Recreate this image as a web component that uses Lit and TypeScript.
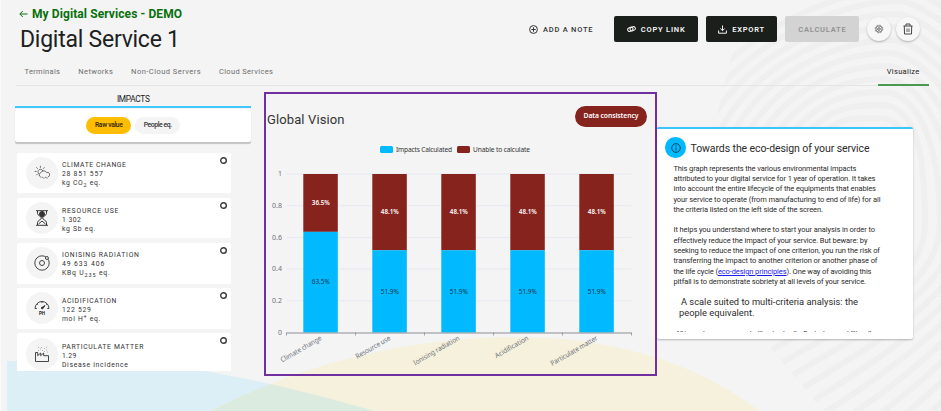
import { LitElement, html, css, svg, nothing } from "lit";
import { customElement, property, state } from "lit/decorators.js";

/** A single line of text tracked out to a fixed measure. */
@customElement("fit-line")
class FitLine extends LitElement {
  static styles = css`
    :host { display: inline-block; white-space: nowrap; }
    span { display: inline-block; white-space: nowrap; }
  `;
  @property({ type: Number }) w = 0;
  @state() private track = 0;
  firstUpdated() {
    const el = this.renderRoot.querySelector("span") as HTMLElement;
    const natural = el.getBoundingClientRect().width;
    const count = (this.textContent ?? "").trim().length;
    if (natural && count > 1) this.track = (this.w - natural) / (count - 1);
  }
  render() {
    return html`<span style="letter-spacing:${this.track}px;margin-right:${-this.track}px"><slot></slot></span>`;
  }
}

const line = (t: unknown, w: number) => html`<fit-line .w=${w}>${t}</fit-line>`;

/* ---------- icons ---------- */
const sun = svg`<g fill="none" stroke="#333" stroke-width=".7" stroke-linecap="round">
  <path d="M4.6 8.6a2.6 2.6 0 1 1 4.3-2.8M6.4 1.2v1.2M2.6 2.6l.9.9M1 6.4h1.2M2.6 9.900l.8-.8M10.2 2.6l-.8.9"/>
  <path d="M6.5 12a2.3 2.3 0 0 1 .2-4.2 3.3 3.3 0 0 1 5.900-.3 2.300 2.300 0 0 1 1.600 4.400"/>
  <path d="M8 12.300h.2M9.800 13h.2M11.600 12.300h.2M13 13h.1" stroke-width=".9"/></g>`;
const glass = svg`<g fill="none" stroke="#222" stroke-width=".9">
  <path d="M2 .7h12M2 15.300h12M3.500 1v2.500c0 2 4 3 4 4.500s-4 2.500-4 4.500V15M12.500 1v2.500c0 2-4 3-4 4.500s4 2.500 4 4.500V15"/>
  <circle cx="8" cy="4" r="2.500" fill="#555"/><path d="M5.600 4h4.800M8 1.500v5M4.500 14l3.500-3 3.500 3"/></g>`;
const atom = svg`<g fill="none" stroke="#333" stroke-width=".9"><circle cx="8" cy="8" r="7.200"/><circle cx="8" cy="8" r="2.500"/><circle cx="12.900" cy="3" r="1.500" fill="#f4f4f4"/></g>`;
const gauge = svg`<g fill="none" stroke="#333" stroke-width=".9"><path d="M2.800 8.500H1A7 7 0 0 1 15 8.500h-1.800"/>
  <path d="M8 1.500v1.500M3 3.800l1 .9M13 3.800l-1 .9" /><path d="M7 8l4-2.500-2.500 3.500z" fill="#222"/></g>
  <text x="8" y="14.500" text-anchor="middle" font-size="4.500" font-weight="700" fill="#222">PH</text>`;
const factory = svg`<g fill="none" stroke="#333" stroke-width=".9"><path d="M1.500 15.500v-9h2.200v3.200l3-2.700v2.700l3-2.700v2.700h4.800v5.800z"/>
  <path d="M4 4.500h.5M6 3h.5M8 4.500h.5M10 2.500h.5M12 4h.5M7 1.500h.5M12.500 1.200h.5M10 5.500h.5M13.500 6h.5M4 1.500h.5" stroke-width=".7"/></g>`;

const impacts = [
  { icon: sun, name: "CLIMATE CHANGE", nw: 64, val: "28 851 557", vw: 41, unit: html`kg CO<sub>2</sub> eq.`, uw: 38.500, dy: 0 },
  { icon: glass, name: "RESOURCE USE", nw: 56.500, val: "1 302", vw: 19, unit: "kg Sb eq.", uw: 33.500, dy: 1 },
  { icon: atom, name: "IONISING RADIATION", nw: 77, val: "49 633 406", vw: 42.500, unit: html`KBq U<sub>235</sub> eq.`, uw: 48, dy: 0 },
  { icon: gauge, name: "ACIDIFICATION", nw: 54.500, val: "122 529", vw: 29, unit: html`mol H<sup>+</sup> eq.`, uw: 38.500, dy: 0 },
  { icon: factory, name: "PARTICULATE MATTER", nw: 81.500, val: "1.29", vw: 14.500, unit: "Disease incidence", uw: 66, dy: 1 },
];

const bars: { name: string; calc: number; len: number }[] = [
  { name: "Climate change", calc: 0.635, len: 46 },
  { name: "Resource use", calc: 0.519, len: 39 },
  { name: "Ionising radiation", calc: 0.519, len: 52 },
  { name: "Acidification", calc: 0.519, len: 37.500 },
  { name: "Particulate matter", calc: 0.519, len: 53 },
];

@customElement("page-backdrop")
class PageBackdrop extends LitElement {
  static styles = css`:host, svg { display: block; }`;
  render() {
    const loops = Array.from({ length: 13 }, (_, i) => i - 3).map((k) => {
      const r = 925 + 15 * k, t = 105 - 13 * k, l = 800 - 14 * k;
      const x = 772 + 10.600 * k, y = 350 + 12.500 * k;
      return svg`<path d="M${x} ${y} C${x + 65} ${y - 42} ${r} 295 ${r} 222 C${r} ${150 - 6 * k} ${915 + 3 * k} ${t} ${880 + 2 * k} ${t} C${840 - k} ${t} ${l + 28} ${112 - 7 * k} ${l} 140"/>`;
    });
    const hill = "M205 414C290 369 400 337 515 337C605 337 695 359 763 414Z";
    const sea = "M7 361H100C180 361 290 386 384 414H7Z";
    return html`<svg width="941" height="411" viewBox="0 0 941 411">
      <defs><clipPath id="edge"><path d="M745 0H941V411H718V110Z"/></clipPath><clipPath id="hill"><path d=${hill}/></clipPath></defs>
      <rect width="1" height="411" fill="#fbfbfb"/>
      <g clip-path="url(#edge)" fill="none" stroke="#efefef" stroke-width="6">${loops}</g>
      <path d=${sea} fill="#dceef6"/><path d=${hill} fill="#f6f1dc"/>
      <path d=${sea} fill="#dcebe0" clip-path="url(#hill)"/>
    </svg>`;
  }
}

@customElement("top-bar")
class TopBar extends LitElement {
  static styles = css`
    :host { display: flex; justify-content: space-between; height: 60px; padding: 0 21px 0 19px; }
    .crumb { display: flex; align-items: center; gap: 4px; height: 12px; margin-top: 8px; color: #08700c; font-size: 12px; font-weight: 700; line-height: 12px; }
    h1 { margin: 6px 0 0 1px; font-size: 23px; font-weight: 400; line-height: 28px; color: #1d211d; }
    .actions { display: flex; align-items: center; height: 26px; margin-top: 16px; font-size: 7.500px; font-weight: 600; }
    .note, .btn { display: flex; align-items: center; justify-content: center; gap: 5px; box-sizing: border-box; }
    .note { margin-right: 21.500px; color: #333; font-weight: 500; }
    .btn { height: 25.500px; border-radius: 2px; background: #1b1f1b; color: #f5f5f5; }
    .copy { width: 83.500px; } .export { width: 71.500px; margin: 0 8px; }
    .off { width: 74px; background: #d3d3d3; color: #929292; }
    .round { width: 24px; height: 24px; margin-left: 8px; border-radius: 50%; background: #f7f7f7; box-shadow: 0 1px 2px #0004; display: flex; align-items: center; justify-content: center; }
    .bin { margin-left: 5px; }
    svg { display: block; fill: none; stroke: currentColor; }
  `;
  render() {
    return html`
      <div>
        <div class="crumb"><svg width="9" height="8" viewBox="0 0 9 8"><path d="M8.500 4H1M3.800 1L.8 4l3 3"/></svg>${line("My Digital Services - DEMO", 150)}</div>
        <h1>${line("Digital Service 1", 160)}</h1>
      </div>
      <div class="actions">
        <div class="note"><svg width="9" height="9" viewBox="0 0 9 9"><circle cx="4.500" cy="4.500" r="3.900"/><path d="M4.500 2.300v4.400M2.300 4.500h4.400"/></svg>${line("ADD A NOTE", 49.500)}</div>
        <div class="btn copy"><svg width="9" height="8" viewBox="0 0 9 8"><g transform="rotate(-22 4.500 4)"><rect x=".6" y="2" width="5.400" height="3.600" rx="1.800"/><rect x="3" y="2.500" width="5.400" height="3.600" rx="1.800"/></g></svg>${line("COPY LINK", 44)}</div>
        <div class="btn export"><svg width="9" height="9" viewBox="0 0 9 9"><path d="M4.500.5v5M2.300 3.500l2.200 2.200 2.200-2.200M.6 5.500v2.700h7.800V5.500"/></svg>${line("EXPORT", 32)}</div>
        <div class="btn off">${line("CALCULATE", 47.500)}</div>
        <div class="round"><svg width="10" height="10" viewBox="0 0 10 10"><circle cx="5" cy="5" r="3.200" stroke="#666" stroke-width=".9"/><circle cx="5" cy="5" r="1.300" stroke="#555" stroke-width=".9"/><circle cx="5" cy="5" r="3.900" stroke="#777" stroke-width=".8" stroke-dasharray="1.530"/></svg></div>
        <div class="round bin"><svg width="10" height="12" viewBox="0 0 10 12"><g stroke="#444"><path d="M.5 3h9M3 2.800V1h4v1.800M1.300 3l.2 8h7l.2-8"/><path d="M3.800 5.500v3.500M5 5.500v3.500M6.200 5.500v3.500" stroke-width=".6"/></g></svg></div>
      </div>`;
  }
}

@customElement("tab-bar")
class TabBar extends LitElement {
  static styles = css`
    :host { display: flex; align-items: stretch; height: 26px; margin: 0 12.500px 0 15.500px; padding-left: 9px; gap: 18.300px; box-sizing: border-box; font-size: 7.500px; line-height: 23px; color: #6d6d6d; border-bottom: 1px solid #e5e5e5; }
    .active { margin-left: auto; width: 51px; height: 24px; text-align: center; color: #222; border-bottom: 2px solid #4a9a4d; }
  `;
  render() {
    return html`<div>${line("Terminals", 35.500)}</div><div>${line("Networks", 34.500)}</div><div>${line("Non-Cloud Servers", 69.500)}</div><div>${line("Cloud Services", 54)}</div><div class="active">${line("Visualize", 32.500)}</div>`;
  }
}

@customElement("impact-panel")
class ImpactPanel extends LitElement {
  static styles = css`
    :host { display: block; width: 236px; }
    .head { height: 20px; line-height: 26px; text-align: center; font-size: 8.300px; color: #222; border-bottom: 2px solid #41c6fb; }
    .modes { display: flex; justify-content: center; align-items: center; gap: 4px; height: 33px; margin-top: 1px; background: #fff; border-radius: 2px; box-shadow: 0 1.500px 1px #0003; font-size: 6.900px; font-weight: 500; }
    .pill { height: 17px; line-height: 17px; width: 45px; text-align: center; border-radius: 9px; background: #f4f4f4; color: #333; }
    .on { background: #ffbd00; color: #3b2e00; font-weight: 600; font-size: 6.700px; }
    .list { height: 218.500px; margin: 10.500px 0 0 2px; overflow: hidden; display: flex; flex-direction: column; gap: 4.500px; width: 214px; }
    .card { display: flex; flex: 0 0 40.700px; align-items: center; background: #fff; border-radius: 2px; padding-left: 8.500px; box-sizing: border-box; }
    .ico { width: 32px; height: 32px; border-radius: 50%; background: #f4f4f4; display: flex; align-items: center; justify-content: center; }
    .txt { display: flex; flex-direction: column; align-self: flex-start; margin: 8.600px 0 0 4px; font-size: 6.800px; color: #333; line-height: 9px; }
    .low { margin-top: 9.700px; }
    .txt fit-line { height: 9px; }
    sub, sup { font-size: 5.500px; line-height: 0; }
    .dot { width: 7px; height: 7px; margin: 4px 4.500px 0 auto; align-self: flex-start; }
  `;
  render() {
    return html`<div class="head">${line("IMPACTS", 33)}</div>
      <div class="modes"><div class="pill on">${line("Raw value", 28)}</div><div class="pill">${line("People eq.", 28.500)}</div></div>
      <div class="list">${impacts.map((i) => html`<div class="card">
        <div class="ico"><svg width="16" height="16" viewBox="0 0 16 16">${i.icon}</svg></div>
        <div class="txt ${i.dy ? "low" : ""}">${line(i.name, i.nw)}${line(i.val, i.vw)}${line(i.unit, i.uw)}</div>
        <svg class="dot" viewBox="0 0 7 7"><circle cx="3.500" cy="3.500" r="2.800" fill="none" stroke="#3a3a3a" stroke-width="1.400"/></svg></div>`)}</div>`;
  }
}

@customElement("vision-chart")
class VisionChart extends LitElement {
  static styles = css`
    :host { display: flex; flex-direction: column; box-sizing: border-box; width: 393px; height: 284px; border: 2px solid #7030a0; color: #333; }
    .top { display: flex; justify-content: space-between; align-items: flex-start; height: 51px; padding: 12px 8px 0 1px; box-sizing: border-box; }
    .title { font-size: 13px; line-height: 27px; }
    .badge { width: 72px; height: 21px; border-radius: 11px; background: #86231d; color: #fff; text-align: center; font: 600 6.800px/20px "Noto Sans", sans-serif; }
    .legend { display: flex; align-items: center; height: 9px; padding-left: 114px; gap: 3px; font: 6.600px/9px "Noto Sans", sans-serif; }
    .sw { width: 13px; height: 7px; border-radius: 1.500px; background: #00b9ff; }
    .red { background: #86231d; margin-left: 2px; }
    svg { display: block; font: 7px "Noto Sans", sans-serif; }
  `;
  render() {
    const top = 20, h = 158.500, left = 20.500, step = 69;
    const pct = (v: number) => (v * 100).toFixed(1) + "%";
    return html`
      <div class="top"><div class="title">${line("Global Vision", 77.500)}</div><div class="badge">${line("Data consistency", 55)}</div></div>
      <div class="legend"><div class="sw"></div>${line("Impacts Calculated", 56)}<div class="sw red"></div>${line("Unable to calculate", 57)}</div>
      <svg width="389" height="220" viewBox="0 0 389 220">
        ${[0, 1, 2, 3, 4, 5].map((n) => { const y = top + h - (n * h) / 5; return svg`
          ${n ? svg`<path d="M${left} ${y}h345" stroke="#e7e9f3" stroke-width="1"/>` : nothing}
          <text x="16" y=${y + 2.300} text-anchor="end" fill="#6e7079">${n / 5}</text>`; })}
        ${bars.map((b, i) => { const x = left + step * i + 16.800, s = top + h * (1 - b.calc), c = x + 17.500; return svg`
          <rect x=${x} y=${top} width="34.500" height=${s - top} fill="#86231d"/>
          <rect x=${x} y=${s} width="34.500" height=${top + h - s} fill="#00b9ff"/>
          <text x=${c} y=${(top + s) / 2 + 2.300} text-anchor="middle" fill="#fff" font-weight="600" textLength="18" lengthAdjust="spacingAndGlyphs">${pct(1 - b.calc)}</text>
          <text x=${c} y=${(top + h + s) / 2 + 2.300} text-anchor="middle" fill="#12384a" textLength="18" lengthAdjust="spacingAndGlyphs">${pct(b.calc)}</text>
          <text transform="translate(${c + 1.300} ${top + h + 7}) rotate(-30)" text-anchor="end" fill="#6e7079" textLength=${b.len} lengthAdjust="spacingAndGlyphs">${b.name}</text>`; })}
        <path d="M${left} ${top + h + .5}h345" stroke="#8c8e96"/>
        ${[0, 1, 2, 3, 4, 5].map((i) => svg`<path d="M${left + step * i} ${top + h}v3" stroke="#8c8e96" stroke-width=".8"/>`)}
      </svg>`;
  }
}

@customElement("info-card")
class InfoCard extends LitElement {
  static styles = css`
    :host { display: block; box-sizing: border-box; width: 256px; height: 211.500px; background: #fff; border-top: 2px solid #3ac5fc; border-radius: 2px; box-shadow: 0 1px 2px #0004; color: #2b2b2b; }
    .head { display: flex; align-items: center; height: 21px; padding: 8px 0 0 8.500px; gap: 4.500px; font-size: 10.500px; }
    .head fit-line { padding-top: 1.500px; }
    .badge { width: 20.500px; height: 20.500px; border-radius: 50%; background: #00b9ff; display: flex; align-items: center; justify-content: center; }
    .body { height: 173.500px; overflow: hidden; padding: 5.700px 0 0 16.500px; box-sizing: border-box; }
    .p { display: flex; flex-direction: column; font-size: 7.500px; line-height: 10.300px; margin-bottom: 10.300px; }
    .p fit-line, .cut fit-line { height: 10.300px; }
    .sub { display: flex; flex-direction: column; font-size: 9.300px; line-height: 11.300px; padding-left: 5.500px; margin-top: -1.500px; }
    .first { padding-left: 2px; }
    .cut { font-size: 7.500px; line-height: 10.300px; padding-left: 2px; margin-top: 10px; }
    a { color: #1a1aee; text-decoration: underline; }
  `;
  render() {
    return html`
      <div class="head"><div class="badge"><svg width="10" height="10" viewBox="0 0 10 10" fill="none" stroke="#07405a"><circle cx="5" cy="5" r="4.300"/><path d="M5 4.500v3M5 2.500v1.200"/></svg></div>${line("Towards the eco-design of your service", 179)}</div>
      <div class="body">
        <div class="p">${line("This graph represents the various environmental impacts", 183)}${line("attributed to your digital service for 1 year of operation. It takes", 202)}${line("into account the entire lifecycle of the equipments that enables", 202.500)}${line("your service to operate (from manufacturing to end of life) for all", 207)}${line("the criteria listed on the left side of the screen.", 149.500)}</div>
        <div class="p">${line("It helps you understand where to start your analysis in order to", 201.500)}${line("effectively reduce the impact of your service. But beware: by", 194)}${line("seeking to reduce the impact of one criterion, you run the risk of", 206.500)}${line("transferring the impact to another criterion or another phase of", 204)}${line(html`the life cycle (<a>eco-design principles</a>). One way of avoiding this`, 198)}${line("pitfall is to demonstrate sobriety at all levels of your service.", 192.500)}</div>
        <div class="sub"><div class="first">${line("A scale suited to multi-criteria analysis: the", 177)}</div>${line("people equivalent.", 75.500)}</div>
        <div class="cut">${line("All impacts are expressed with mixed units. For instance additionally", 199)}</div>
      </div>`;
  }
}

@customElement("app-root")
class AppRoot extends LitElement {
  static styles = css`
    :host { display: block; position: relative; width: 941px; height: 411px; overflow: hidden; background: #f4f4f4; font-family: Roboto, "Liberation Sans", sans-serif; }
    page-backdrop { position: absolute; inset: 0; }
    .page { position: relative; }
    .main { display: flex; align-items: flex-start; padding-left: 15.400px; }
    vision-chart { margin: 6px 0 0 12.600px; flex: none; }
    impact-panel { flex: none; }
    info-card { margin-top: 41px; flex: none; }
  `;
  render() {
    return html`<page-backdrop></page-backdrop>
      <div class="page"><top-bar></top-bar><tab-bar></tab-bar>
        <div class="main"><impact-panel></impact-panel><vision-chart></vision-chart><info-card></info-card></div>
      </div>`;
  }
}
